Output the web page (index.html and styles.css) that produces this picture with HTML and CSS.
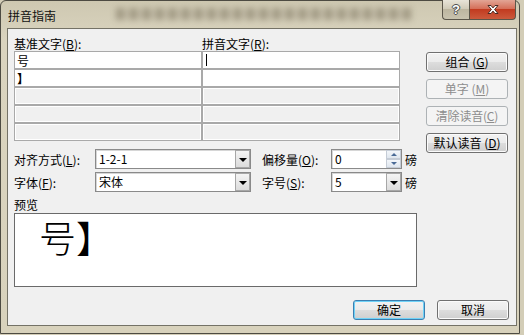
FILE: index.html
```
<!DOCTYPE html>
<html lang="zh-CN">
<head>
    <meta charset="UTF-8">
    <title>拼音指南</title>
    <link rel="stylesheet" href="styles.css">
</head>
<body>

<div class="window">
    <div class="titlebar">
        <span class="title">拼音指南</span>
        <span class="behind"></span>
        <div class="caption-btns">
            <span class="cap-help">?</span>
            <span class="cap-close">
                <svg width="14" height="11" viewBox="0 0 14 11">
                    <path d="M2 1.5h3l2 2.4 2-2.4h3l-3.4 4 3.4 4h-3l-2-2.4-2 2.4h-3l3.4-4z" fill="#fff" stroke="#4a2a22" stroke-width="1"/>
                </svg>
            </span>
        </div>
    </div>

    <div class="client">
        <div class="top-area">
            <div class="guide">
                <div class="guide-head">
                    <span class="base-label">基准文字(<u>B</u>):</span>
                    <span>拼音文字(<u>R</u>):</span>
                </div>
                <div class="guide-grid">
                    <div class="cell">号</div>
                    <div class="cell"><span class="caret"></span></div>
                    <div class="cell"><b>】</b></div>
                    <div class="cell"></div>
                    <div class="cell off"></div>
                    <div class="cell off"></div>
                    <div class="cell off"></div>
                    <div class="cell off"></div>
                    <div class="cell off"></div>
                    <div class="cell off"></div>
                </div>
            </div>
            <div class="side-btns">
                <button class="btn">组合 (<u>G</u>)</button>
                <button class="btn" disabled>单字 (<u>M</u>)</button>
                <button class="btn tight" disabled>清除读音(<u>C</u>)</button>
                <button class="btn">默认读音 (<u>D</u>)</button>
            </div>
        </div>

        <div class="options">
            <span class="opt-label">对齐方式(<u>L</u>):</span>
            <div class="combo"><span class="combo-val">1-2-1</span><span class="drop"></span></div>
            <span class="opt-label second">偏移量(<u>O</u>):</span>
            <div class="combo"><span class="combo-val">0</span><span class="spin"><i class="up"></i><i class="down"></i></span></div>
            <span class="unit">磅</span>

            <span class="opt-label">字体(<u>F</u>):</span>
            <div class="combo"><span class="combo-val">宋体</span><span class="drop"></span></div>
            <span class="opt-label second">字号(<u>S</u>):</span>
            <div class="combo"><span class="combo-val">5</span><span class="drop"></span></div>
            <span class="unit">磅</span>
        </div>

        <div class="preview-label">预览</div>
        <div class="preview"><span class="pv-text">号】</span></div>

        <div class="footer">
            <button class="btn default">确定</button>
            <button class="btn">取消</button>
        </div>
    </div>
</div>

</body>
</html>
```

FILE: styles.css
```
body {
    margin: 0;
    width: 524px;
    height: 335px;
    overflow: hidden;
    background: #d3cdb7;
    font-family: "Noto Sans CJK SC", "Liberation Sans", sans-serif;
    font-size: 12px;
    color: #000;
}

u {
    text-decoration: underline;
}

.window {
    box-sizing: border-box;
    width: 520px;
    height: 334px;
    border: 1px solid #4d4b42;
    border-radius: 6px 6px 0 0;
    background: linear-gradient(#cec8b1, #dad4bf 40px, #d8d2bc);
    padding: 0 2px 7px 6px;
    display: flex;
    flex-direction: column;
}

/* title bar */
.titlebar {
    flex-shrink: 0;
    height: 27px;
    display: flex;
    align-items: flex-start;
}

.title {
    padding: 7px 0 0 1px;
    line-height: 16px;
    color: #111;
}

.behind {
    flex: 1;
    height: 12px;
    margin: 7px 30px 0 60px;
    background: repeating-linear-gradient(90deg, rgba(70, 60, 40, 0.35) 0 9px, transparent 9px 13px);
    filter: blur(3px);
}

.caption-btns {
    display: flex;
    margin-top: -1px;
    margin-right: 1px;
}

.cap-help, .cap-close {
    box-sizing: border-box;
    height: 20px;
    display: flex;
    align-items: center;
    justify-content: center;
    border: 1px solid #5b564a;
    border-top: none;
}

.cap-help {
    width: 27px;
    border-radius: 0 0 0 4px;
    border-right: none;
    background: linear-gradient(#e8e4d8, #cfc9b6 50%, #bdb6a0 50%, #c9c3ae);
    color: #fff;
    font: bold 13px "Liberation Sans", sans-serif;
    text-shadow: 0 0 1px #333, 1px 0 0 #555, -1px 0 0 #555, 0 1px 0 #555, 0 -1px 0 #555;
}

.cap-close {
    width: 47px;
    border-radius: 0 0 4px 0;
    background: linear-gradient(#e2a595, #d5705a 45%, #c23b20 50%, #cc5a3c);
}

/* client area */
.client {
    flex: 1;
    min-height: 0;
    overflow: hidden;
    border: 1px solid #747266;
    background: #f0f0f0;
    padding: 8px 7px 0 6px;
    display: flex;
    flex-direction: column;
}

.top-area {
    display: flex;
    align-items: flex-start;
}

.guide-head {
    display: flex;
    line-height: 14px;
}

.base-label {
    width: 188px;
}

.guide-grid {
    display: grid;
    grid-template-columns: 188px 198px;
    grid-auto-rows: 18px;
}

.cell {
    box-sizing: border-box;
    border: 1px solid #a9a9a9;
    background: #fff;
    line-height: 15px;
    padding-left: 2px;
    display: flex;
    align-items: center;
}

.cell.off {
    background: #f0f0f0;
    box-shadow: inset 0 0 0 1px #fff;
}

.caret {
    width: 1px;
    height: 12px;
    margin-left: 1px;
    background: #000;
}

.side-btns {
    margin-left: 26px;
    margin-bottom: -20px;
    padding-top: 15px;
    display: flex;
    flex-direction: column;
    gap: 7px;
}

.btn {
    box-sizing: border-box;
    width: 82px;
    height: 20px;
    padding: 0;
    border: 1px solid #707070;
    border-radius: 3px;
    background: linear-gradient(#f2f2f2, #ebebeb 50%, #dddddd 50%, #cfcfcf);
    box-shadow: inset 0 0 0 1px #fbfbfb;
    font: 12px "Noto Sans CJK SC", sans-serif;
    color: #000;
    line-height: 16px;
    white-space: nowrap;
}

.btn.tight {
    letter-spacing: -0.2px;
}

.btn:disabled {
    border-color: #adb2b5;
    background: #f4f4f4;
    box-shadow: none;
    color: #8d8d8d;
}

/* alignment / font rows */
.options {
    margin-top: 8px;
    display: grid;
    grid-template-columns: 81px 156px 80px 71px auto;
    grid-auto-rows: 20px;
    row-gap: 3px;
    align-items: center;
}

.opt-label {
    white-space: nowrap;
}

.opt-label.second {
    padding-left: 11px;
}

.combo {
    box-sizing: border-box;
    height: 20px;
    border: 1px solid #8a8a8a;
    box-shadow: inset 1px 1px 0 #d6d6d6;
    background: #fff;
    display: flex;
    align-items: center;
}

.combo-val {
    flex: 1;
    padding-left: 3px;
    line-height: 16px;
}

.drop {
    box-sizing: border-box;
    width: 15px;
    height: 18px;
    border: 1px solid #a7a7a7;
    background: linear-gradient(#f4f4f4, #dcdcdc);
    display: flex;
    align-items: center;
    justify-content: center;
}

.drop::after {
    content: "";
    border-left: 4px solid transparent;
    border-right: 4px solid transparent;
    border-top: 4px solid #000;
    margin-top: 1px;
}

.spin {
    width: 15px;
    height: 18px;
    display: flex;
    flex-direction: column;
}

.spin i {
    flex: 1;
    display: flex;
    align-items: center;
    justify-content: center;
    background: linear-gradient(#f3f6fa, #dfe6ee);
    border: 1px solid #c5ccd6;
}

.spin i::after {
    content: "";
    border-left: 3px solid transparent;
    border-right: 3px solid transparent;
}

.spin .up::after {
    border-bottom: 3px solid #4a6a96;
}

.spin .down::after {
    border-top: 3px solid #4a6a96;
}

.unit {
    padding-left: 3px;
}

/* preview */
.preview-label {
    margin-top: 5px;
    line-height: 16px;
}

.preview {
    box-sizing: border-box;
    width: 403px;
    height: 74px;
    border: 1px solid #6a6a6a;
    background: #fff;
    padding: 3px 0 0 24px;
}

.pv-text {
    font-size: 37px;
    line-height: 40px;
    font-weight: 300;
}

.footer {
    margin-top: 13px;
    display: flex;
    justify-content: flex-end;
    gap: 12px;
}

.footer .btn {
    width: 72px;
}

.btn.default {
    border-color: #3c7fb1;
    box-shadow: inset 0 0 0 1px #6fd2f7;
}
```
